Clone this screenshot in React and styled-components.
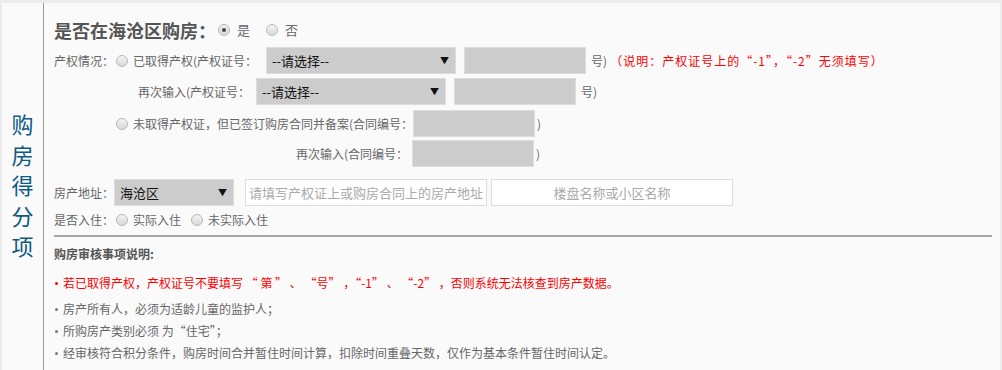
import React from 'react';
import styled, { createGlobalStyle } from 'styled-components';

const GlobalStyle = createGlobalStyle`
  html, body {
    margin: 0;
    padding: 0;
    background: #ececec;
  }
  body {
    font-family: "Noto Sans CJK SC", "Noto Sans", sans-serif;
    font-size: 12px;
    color: #666;
  }
`;

const Page = styled.div`
  padding: 3px 2px 0 2px;
  height: 370px;
  box-sizing: border-box;
  overflow: hidden;
`;

const Panel = styled.div`
  display: flex;
  background: #fafafa;
  min-height: 367px;
`;

const SideCol = styled.div`
  width: 41px;
  border-right: 1px solid #999;
  display: flex;
  align-items: center;
  justify-content: center;
`;

const SideTitle = styled.div`
  writing-mode: vertical-rl;
  font-size: 22px;
  letter-spacing: 8.5px;
  color: #0d5b84;
  line-height: 22px;
  margin-top: 6px;
`;

const Content = styled.div`
  flex: 1;
  padding: 10px 8px 8px 10px;
  display: flex;
  flex-direction: column;
`;

const Row = styled.div`
  display: flex;
  align-items: center;
  height: ${(p) => p.$h || 27}px;
  margin-top: ${(p) => p.$mt || 0}px;
  white-space: nowrap;
`;

const Title = styled.span`
  font-size: 18px;
  font-weight: bold;
  color: #555;
  margin-right: 2px;
`;

const Label = styled.span`
  display: inline-block;
  width: ${(p) => (p.$w ? `${p.$w}px` : 'auto')};
  text-align: ${(p) => (p.$right ? 'right' : 'left')};
  color: #666;
  font-size: 12px;
  margin-right: ${(p) => p.$mr || 0}px;
`;

const Radio = styled.span`
  display: inline-block;
  position: relative;
  width: 10px;
  height: 10px;
  border-radius: 50%;
  border: 1px solid #b8b8b8;
  background: linear-gradient(#f4f4f4, #d8d8d8);
  margin-right: ${(p) => p.$mr || 5}px;
  flex: none;

  &::after {
    content: '';
    display: ${(p) => (p.$checked ? 'block' : 'none')};
    position: absolute;
    left: 3px;
    top: 3px;
    width: 4px;
    height: 4px;
    border-radius: 50%;
    background: #444;
  }
`;

const Option = styled.span`
  color: #666;
  font-size: ${(p) => p.$size || 12}px;
  margin-right: ${(p) => p.$mr || 0}px;
`;

const SelectBox = styled.div`
  width: ${(p) => p.$w}px;
  height: 27px;
  box-sizing: border-box;
  background: #ccc;
  border: 1px solid #ddd;
  display: flex;
  align-items: center;
  justify-content: space-between;
  padding: 0 6px 0 5px;
  margin-left: ${(p) => p.$ml || 0}px;
  font-size: 13px;
  color: #111;
  flex: none;
`;

const Arrow = styled.span`
  font-size: 9px;
  color: #111;
`;

const GrayInput = styled.input`
  width: ${(p) => p.$w || 122}px;
  height: 27px;
  box-sizing: border-box;
  background: #ccc;
  border: 1px solid #ddd;
  margin: 0 ${(p) => (p.$mr === undefined ? 4 : p.$mr)}px 0 ${(p) => p.$ml || 0}px;
  padding: 0;
  outline: none;
  flex: none;
`;

const TextInput = styled.input`
  width: 242px;
  height: 27px;
  box-sizing: border-box;
  background: #fff;
  border: 1px solid #ddd;
  margin-left: ${(p) => p.$ml || 0}px;
  padding: 0;
  text-align: center;
  font-family: inherit;
  font-size: 13px;
  outline: none;
  flex: none;

  &::placeholder {
    color: #aaa;
  }
`;

const Suffix = styled.span`
  color: #666;
  font-size: 12px;
`;

const Note = styled.span`
  color: #f00;
  font-size: 12px;
  letter-spacing: 1px;
  margin-left: 3px;
`;

const Divider = styled.div`
  height: 2px;
  background: #a6a6a6;
  margin-top: 6px;
`;

const NoteTitle = styled.div`
  font-weight: bold;
  color: #555;
  font-size: 12px;
  line-height: 18px;
  margin-top: 8px;
`;

const List = styled.ul`
  list-style: none;
  margin: 0;
  padding: 0;
`;

const Item = styled.li`
  position: relative;
  padding-left: 9px;
  font-size: 12px;
  line-height: 22px;
  color: ${(p) => (p.$red ? '#f00' : '#666')};
  margin-top: ${(p) => p.$mt || 0}px;
  white-space: nowrap;

  &::before {
    content: '';
    position: absolute;
    left: 1px;
    top: 10px;
    width: 3px;
    height: 3px;
    border-radius: 50%;
    background: ${(p) => (p.$red ? '#f00' : '#777')};
  }
`;

const Select = ({ w, ml, value }) => (
  <SelectBox $w={w} $ml={ml}>
    <span>{value}</span>
    <Arrow>▼</Arrow>
  </SelectBox>
);

export default function App() {
  return (
    <>
      <GlobalStyle />
      <Page>
        <Panel>
          <SideCol>
            <SideTitle>购房得分项</SideTitle>
          </SideCol>
          <Content>
            <Row $mt={3}>
              <Title>是否在海沧区购房：</Title>
              <Radio $checked $mr={7} />
              <Option $size={13} $mr={16}>是</Option>
              <Radio $mr={7} />
              <Option $size={13}>否</Option>
            </Row>

            <Row $mt={4}>
              <Label $w={62}>产权情况：</Label>
              <Radio />
              <Label $mr={9}>已取得产权(产权证号：</Label>
              <Select w={190} value="--请选择--" />
              <GrayInput $ml={8} $mr={5} />
              <Suffix>号)</Suffix>
              <Note>（说明：产权证号上的“-1”，“-2”无须填写）</Note>
            </Row>

            <Row $mt={4}>
              <Label $w={196} $right>再次输入(产权证号：</Label>
              <Select w={190} ml={6} value="--请选择--" />
              <GrayInput $ml={8} $mr={5} />
              <Suffix>号)</Suffix>
            </Row>

            <Row $mt={5}>
              <Label $w={62} />
              <Radio />
              <Label>未取得产权证，但已签订购房合同并备案(合同编号：</Label>
              <GrayInput $w={122} $mr={2} />
              <Suffix>)</Suffix>
            </Row>

            <Row $mt={3}>
              <Label $w={354} $right $mr={4}>再次输入(合同编号：</Label>
              <GrayInput $w={122} $mr={2} />
              <Suffix>)</Suffix>
            </Row>

            <Row $mt={12}>
              <Label $w={60}>房产地址：</Label>
              <Select w={120} value="海沧区" />
              <TextInput $ml={11} placeholder="请填写产权证上或购房合同上的房产地址" />
              <TextInput $ml={4} placeholder="楼盘名称或小区名称" />
            </Row>

            <Row $mt={4} $h={19}>
              <Label $w={62}>是否入住：</Label>
              <Radio />
              <Option $mr={10}>实际入住</Option>
              <Radio />
              <Option>未实际入住</Option>
            </Row>

            <Divider />

            <NoteTitle>购房审核事项说明:</NoteTitle>

            <List>
              <Item $red $mt={9}>
                若已取得产权，产权证号不要填写 “ 第 ” 、 “号” ，“-1” 、 “-2” ，否则系统无法核查到房产数据。
              </Item>
              <Item $mt={4}>房产所有人，必须为适龄儿童的监护人；</Item>
              <Item>所购房产类别必须 为“住宅”；</Item>
              <Item>经审核符合积分条件，购房时间合并暂住时间计算，扣除时间重叠天数，仅作为基本条件暂住时间认定。</Item>
            </List>
          </Content>
        </Panel>
      </Page>
    </>
  );
}
